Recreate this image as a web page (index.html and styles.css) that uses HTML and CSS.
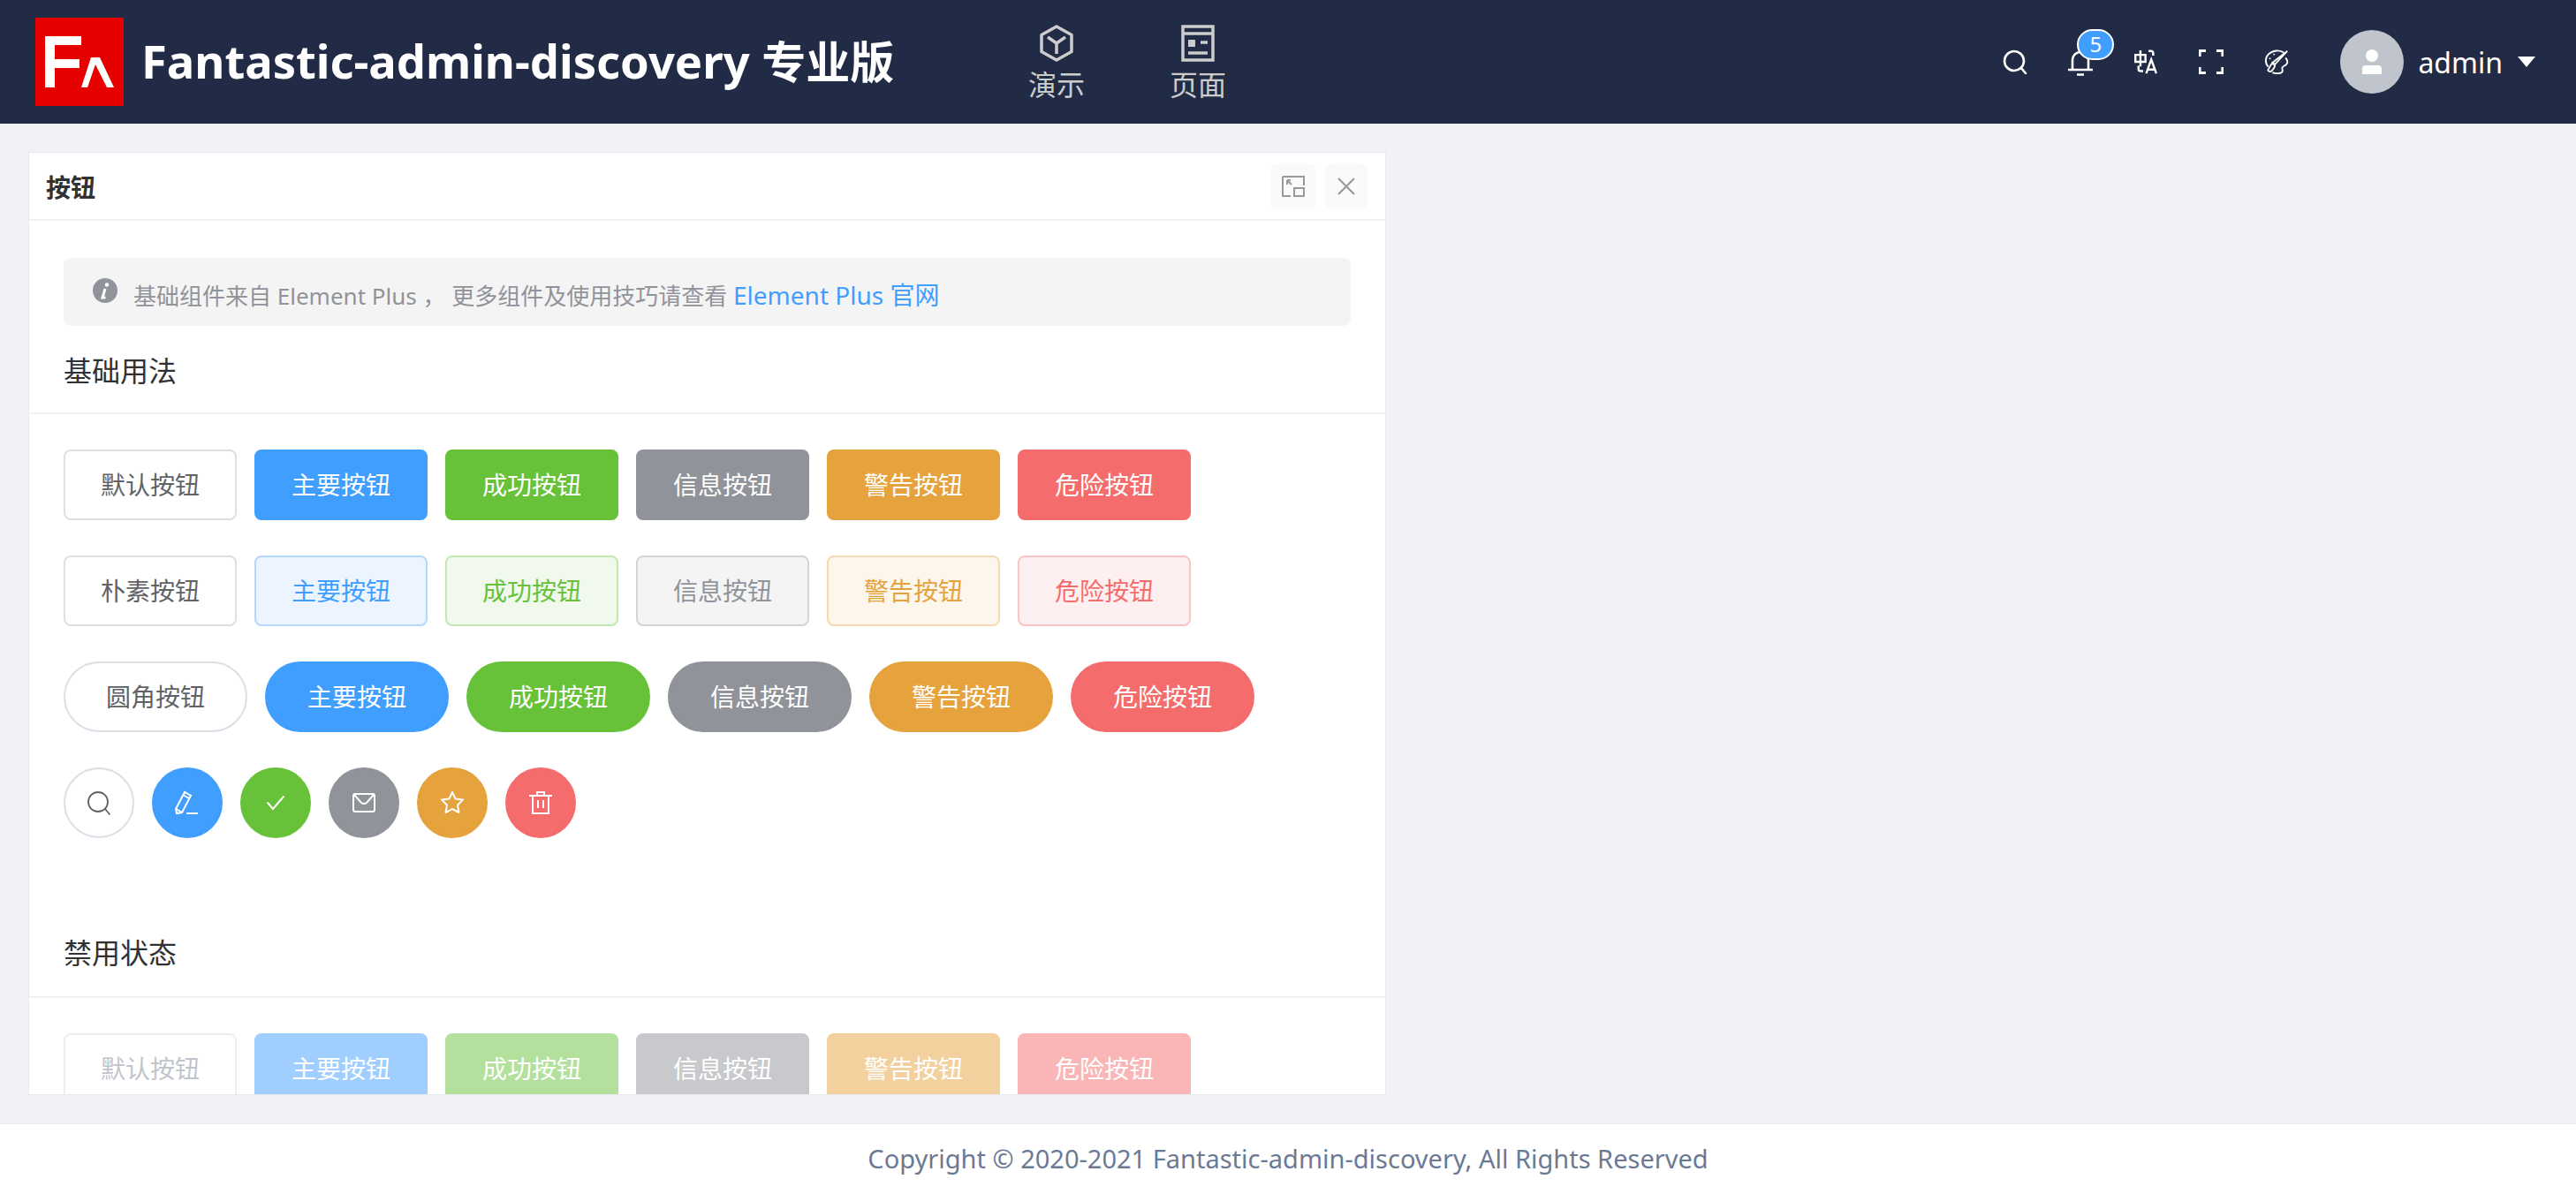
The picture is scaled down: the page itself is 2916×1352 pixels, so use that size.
FILE: index.html
```html
<!DOCTYPE html>
<html lang="zh-CN">
<head>
    <meta charset="UTF-8">
    <title>按钮 - Fantastic-admin-discovery</title>
    <link rel="stylesheet" href="styles.css">
</head>
<body>
<header class="topbar">
    <div class="brand">
        <div class="logo">
            <svg viewBox="0 0 100 100" width="100" height="100">
                <rect width="100" height="100" fill="#e60000"/>
                <path d="M11 79V21H52V31H22V47H50V57H22V79Z" fill="#fff"/>
                <path d="M52 79L63 45H73L89 79H81L68 53L59 79Z" fill="#fff"/>
            </svg>
        </div>
        <span class="brand-name">Fantastic-admin-discovery <span class="brand-edition">专业版</span></span>
    </div>
    <nav class="main-nav">
        <a class="nav-item">
            <svg viewBox="0 0 40 42" width="40" height="42" fill="none" stroke="#ccc" stroke-width="3.500" stroke-linejoin="round">
                <path d="M20 2L37 11.500V30.500L20 40L3 30.500V11.500Z"/>
                <path d="M10 14L20 21L30 14M20 21V33"/>
            </svg>
            <span>演示</span>
        </a>
        <a class="nav-item">
            <svg viewBox="0 0 38 42" width="38" height="42" fill="none" stroke="#ccc" stroke-width="3.500">
                <rect x="2" y="2" width="34" height="38"/>
                <path d="M2 10H36M8 32H30M22 20H30"/>
                <rect x="8" y="17" width="8" height="8" fill="#ccc" stroke="none"/>
            </svg>
            <span>页面</span>
        </a>
    </nav>
    <div class="tools">
        <span class="tool">
            <svg viewBox="0 0 28 28" width="28" height="28" fill="none" stroke="#fff" stroke-width="2.600" stroke-linecap="round">
                <circle cx="13" cy="13" r="11"/>
                <path d="M21 21L26 27"/>
            </svg>
        </span>
        <span class="tool">
            <svg viewBox="0 0 28 32" width="28" height="32" fill="none" stroke="#fff" stroke-width="2.600">
                <path d="M5 24V14A9 9 0 0 1 23 14V24"/>
                <path d="M0 25H28M10 30.500H18"/>
            </svg>
            <b class="badge">5</b>
        </span>
        <span class="tool">
            <svg viewBox="0 0 30 32" width="27" height="28" fill="none" stroke="#fff" stroke-width="2.800">
                <path d="M1 7H14V16H1ZM7.500 1V22"/>
                <path d="M5 21V25Q5 28 8 28H11M18 2H21Q24 2 24 5V8"/>
                <path d="M15 31L21.500 13L28 31M17 26H26"/>
            </svg>
        </span>
        <span class="tool">
            <svg viewBox="0 0 28 28" width="28" height="28" fill="none" stroke="#fff" stroke-width="3.200">
                <path d="M1 8V1.500H8M20 1.500H27V8M27 20V26.500H20M8 26.500H1V20"/>
            </svg>
        </span>
        <span class="tool">
            <svg viewBox="0 0 30 30" width="28" height="28" fill="none" stroke="#fff" stroke-width="2">
                <path d="M5 21C1 17 1 10 5 6C10 1 19 0 24 4M26 10C29 14 29 16 27 18C25 20 23 20 22 22C21 24 24 26 21 28C18 29.500 13 29 10 28"/>
                <path d="M28 2L13 18L10 16Z"/>
                <path d="M10 17C7 18 8 21 5 24C4 26 7 28 9 26C11 24 13 22 13 19Z"/>
                <circle cx="7" cy="11" r="1" fill="#fff" stroke="none"/>
                <circle cx="12" cy="6" r="1" fill="#fff" stroke="none"/>
            </svg>
        </span>
        <div class="user">
            <span class="avatar">
                <svg viewBox="0 0 24 28" width="24" height="28" fill="#fff">
                    <ellipse cx="12" cy="7" rx="7" ry="7"/>
                    <path d="M1 28V22Q1 18 5 18H19Q23 18 23 22V28Z"/>
                </svg>
            </span>
            <span class="user-name">admin</span>
            <span class="caret"></span>
        </div>
    </div>
</header>

<main class="content">
    <section class="card">
        <div class="card-head">
            <h2>按钮</h2>
            <div class="card-actions">
                <span class="square-btn wide">
                    <svg viewBox="0 0 26 24" width="26" height="24" fill="none" stroke="#999" stroke-width="2">
                        <path d="M12 1H25V11M1 1H12M1 1V23H10"/>
                        <rect x="14" y="14" width="11" height="9"/>
                        <path d="M6 5V10M6 5H10M6 5L11 10"/>
                    </svg>
                </span>
                <span class="square-btn">
                    <svg viewBox="0 0 20 20" width="20" height="20" fill="none" stroke="#999" stroke-width="2.200">
                        <path d="M1 1L19 19M19 1L1 19"/>
                    </svg>
                </span>
            </div>
        </div>
        <div class="alert">
            <svg class="alert-icon" viewBox="0 0 28 28" width="28" height="28">
                <circle cx="14" cy="14" r="14" fill="#909399"/>
                <circle cx="16" cy="7.500" r="2.200" fill="#fff"/>
                <path d="M14 12L11 22H14.500" fill="none" stroke="#fff" stroke-width="3"/>
            </svg>
            <span>基础组件来自 Element Plus ， 更多组件及使用技巧请查看 <a class="alert-link">Element Plus 官网</a></span>
        </div>

        <h3 class="section-title">基础用法</h3>
        <div class="demo">
            <div class="btn-row">
                <span class="btn">默认按钮</span>
                <span class="btn primary">主要按钮</span>
                <span class="btn success">成功按钮</span>
                <span class="btn info">信息按钮</span>
                <span class="btn warning">警告按钮</span>
                <span class="btn danger">危险按钮</span>
            </div>
            <div class="btn-row">
                <span class="btn">朴素按钮</span>
                <span class="btn plain primary">主要按钮</span>
                <span class="btn plain success">成功按钮</span>
                <span class="btn plain info">信息按钮</span>
                <span class="btn plain warning">警告按钮</span>
                <span class="btn plain danger">危险按钮</span>
            </div>
            <div class="btn-row">
                <span class="btn round">圆角按钮</span>
                <span class="btn round primary">主要按钮</span>
                <span class="btn round success">成功按钮</span>
                <span class="btn round info">信息按钮</span>
                <span class="btn round warning">警告按钮</span>
                <span class="btn round danger">危险按钮</span>
            </div>
            <div class="btn-row">
                <span class="btn circle">
                    <svg viewBox="0 0 28 28" width="28" height="28" fill="none" stroke="#606266" stroke-width="1.800" stroke-linecap="round">
                        <circle cx="13" cy="13" r="11"/>
                        <path d="M21 21L26 27"/>
                    </svg>
                </span>
                <span class="btn circle primary">
                    <svg viewBox="0 0 28 28" width="28" height="28" fill="none" stroke="#fff" stroke-width="2">
                        <path d="M2 26L1 21L11 2L18 6L8 25ZM1.500 21L8 25M9 5L16 9"/>
                        <path d="M13 26H26"/>
                    </svg>
                </span>
                <span class="btn circle success">
                    <svg viewBox="0 0 28 28" width="28" height="28" fill="none" stroke="#fff" stroke-width="2" stroke-linecap="round">
                        <path d="M5 14L11 21L23 7"/>
                    </svg>
                </span>
                <span class="btn circle info">
                    <svg viewBox="0 0 28 28" width="28" height="28" fill="none" stroke="#fff" stroke-width="2" stroke-linejoin="round">
                        <rect x="2" y="4" width="24" height="20" rx="2"/>
                        <path d="M3 5L11 14Q14 16 17 14L25 5"/>
                    </svg>
                </span>
                <span class="btn circle warning">
                    <svg viewBox="0 0 28 28" width="28" height="28" fill="none" stroke="#fff" stroke-width="2" stroke-linejoin="round">
                        <path d="M14 2L17.500 9.500L26 10.500L20 16.500L21.500 25L14 21L6.500 25L8 16.500L2 10.500L10.500 9.500Z"/>
                    </svg>
                </span>
                <span class="btn circle danger">
                    <svg viewBox="0 0 28 28" width="28" height="28" fill="none" stroke="#fff" stroke-width="2">
                        <path d="M1 6H27M5 6V26H23V6M10 6V2H18V6M11 11V20M17 11V20"/>
                    </svg>
                </span>
            </div>
        </div>

        <h3 class="section-title disabled-title">禁用状态</h3>
        <div class="demo">
            <div class="btn-row">
                <span class="btn disabled">默认按钮</span>
                <span class="btn primary disabled">主要按钮</span>
                <span class="btn success disabled">成功按钮</span>
                <span class="btn info disabled">信息按钮</span>
                <span class="btn warning disabled">警告按钮</span>
                <span class="btn danger disabled">危险按钮</span>
            </div>
        </div>
    </section>
</main>

<footer class="copyright">Copyright © 2020-2021 Fantastic-admin-discovery, All Rights Reserved</footer>
</body>
</html>
```

FILE: styles.css
```css
* {
    box-sizing: border-box;
}
body {
    font-family: "Noto Sans", "Noto Sans CJK SC", sans-serif;
    margin: 0;
    height: 100vh;
    display: flex;
    flex-direction: column;
    background-color: #f0f2f5;
    overflow: hidden;
}
h2, h3 {
    margin: 0;
}

/* top bar */
.topbar {
    height: 140px;
    flex-shrink: 0;
    display: flex;
    align-items: center;
    padding-left: 40px;
    background-color: #222b45;
    color: #fff;
}
.brand {
    width: 1076px;
    display: flex;
    align-items: center;
    gap: 20px;
}
.logo {
    width: 100px;
    height: 100px;
    display: flex;
}
.brand-name {
    font-size: 52.500px;
    font-weight: 700;
    line-height: 60px;
    margin-top: -2px;
    white-space: nowrap;
}
.brand-edition {
    font-size: 50px;
}
.main-nav {
    display: flex;
}
.nav-item {
    width: 160px;
    height: 140px;
    display: flex;
    flex-direction: column;
    align-items: center;
    padding-top: 28px;
    color: #ccc;
    font-size: 32px;
    line-height: 44px;
    gap: 4px;
}
.tools {
    margin-left: auto;
    display: flex;
    align-items: center;
    padding-right: 46px;
}
.tool {
    width: 74px;
    height: 74px;
    display: flex;
    align-items: center;
    justify-content: center;
    position: relative;
}
.badge {
    position: absolute;
    top: 0;
    left: 33px;
    width: 42px;
    height: 35px;
    border: 2px solid #fff;
    border-radius: 18px;
    background-color: #409eff;
    font-size: 24px;
    font-weight: 400;
    line-height: 30px;
    text-align: center;
}
.user {
    display: flex;
    align-items: center;
    margin-left: 35px;
}
.avatar {
    width: 72px;
    height: 72px;
    border-radius: 50%;
    background-color: #c0c4cc;
    display: flex;
    align-items: center;
    justify-content: center;
}
.user-name {
    margin-left: 16px;
    font-size: 32px;
}
.caret {
    margin-left: 17px;
    border-left: 10px solid transparent;
    border-right: 10px solid transparent;
    border-top: 12px solid #fff;
}

/* page */
.content {
    flex: 1;
    min-height: 0;
    padding: 32px 0 32px 32px;
}
.card {
    width: 1537px;
    height: 100%;
    overflow: hidden;
    background-color: #fff;
    border: 1px solid #e8eaee;
}
.card-head {
    height: 77px;
    display: flex;
    align-items: center;
    justify-content: space-between;
    padding: 0 20px 0 19px;
    border-bottom: 2px solid #f0f0f2;
}
.card-head h2 {
    font-size: 28px;
    font-weight: 700;
    color: #303133;
}
.card-actions {
    display: flex;
    gap: 10px;
}
.square-btn {
    width: 48px;
    height: 52px;
    display: flex;
    align-items: center;
    justify-content: center;
    border-radius: 8px;
    background-color: #fafafa;
}
.square-btn.wide {
    width: 52px;
}
.alert {
    margin: 42px 39px 0;
    height: 77px;
    display: flex;
    align-items: center;
    gap: 18px;
    padding: 4px 33px 0;
    border-radius: 8px;
    background-color: #f4f4f5;
    color: #909399;
    font-size: 26px;
}
.alert-icon {
    flex-shrink: 0;
    margin-top: -8px;
}
.alert-link {
    color: #409eff;
    font-size: 28px;
}
.section-title {
    height: 100px;
    padding: 0 39px;
    display: flex;
    align-items: center;
    font-size: 32px;
    font-weight: 400;
    color: #303133;
    border-bottom: 2px solid #f0f0f2;
}
.disabled-title {
    height: 141px;
    align-items: flex-end;
    padding-bottom: 28px;
}
.demo {
    padding: 40px 39px 0;
}
.btn-row {
    display: flex;
    gap: 20px;
    margin-bottom: 40px;
}

/* buttons */
.btn {
    width: 196px;
    height: 80px;
    display: flex;
    align-items: center;
    justify-content: center;
    padding-bottom: 2px;
    border: 2px solid #dcdfe6;
    border-radius: 8px;
    background-color: #fff;
    color: #606266;
    font-size: 28px;
    white-space: nowrap;
}
.btn.primary { background-color: #409eff; border-color: #409eff; color: #fff; }
.btn.success { background-color: #67c23a; border-color: #67c23a; color: #fff; }
.btn.info { background-color: #909399; border-color: #909399; color: #fff; }
.btn.warning { background-color: #e6a23c; border-color: #e6a23c; color: #fff; }
.btn.danger { background-color: #f56c6c; border-color: #f56c6c; color: #fff; }

.btn.plain.primary { background-color: #ecf5ff; border-color: #b3d8ff; color: #409eff; }
.btn.plain.success { background-color: #f0f9eb; border-color: #c2e7b0; color: #67c23a; }
.btn.plain.info { background-color: #f4f4f5; border-color: #d3d4d6; color: #909399; }
.btn.plain.warning { background-color: #fdf6ec; border-color: #f5dab1; color: #e6a23c; }
.btn.plain.danger { background-color: #fef0f0; border-color: #fbc4c4; color: #f56c6c; }

.btn.round {
    width: 208px;
    border-radius: 40px;
}
.btn.circle {
    width: 80px;
    padding-bottom: 0;
    border-radius: 50%;
}
.btn.disabled {
    color: #c0c4cc;
    border-color: #ebeef5;
}
.btn.primary.disabled { background-color: #a0cfff; border-color: #a0cfff; color: #fff; }
.btn.success.disabled { background-color: #b3e19d; border-color: #b3e19d; color: #fff; }
.btn.info.disabled { background-color: #c8c9cc; border-color: #c8c9cc; color: #fff; }
.btn.warning.disabled { background-color: #f3d19e; border-color: #f3d19e; color: #fff; }
.btn.danger.disabled { background-color: #fab6b6; border-color: #fab6b6; color: #fff; }

.copyright {
    height: 80px;
    flex-shrink: 0;
    display: flex;
    align-items: center;
    justify-content: center;
    padding-bottom: 2px;
    background-color: #fff;
    border-top: 1px solid #e8eaee;
    color: #6b7a94;
    font-size: 29px;
}
```
